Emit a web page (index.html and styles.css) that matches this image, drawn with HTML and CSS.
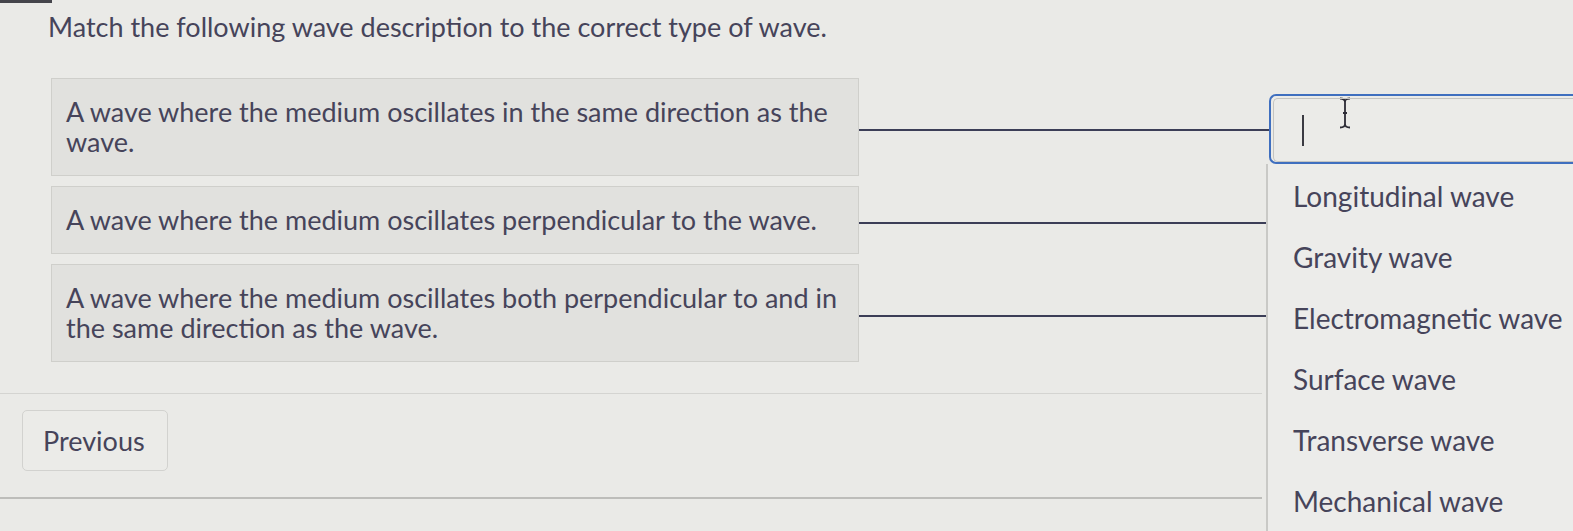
FILE: index.html
```html
<!DOCTYPE html>
<html lang="en">
<head>
  <meta charset="UTF-8" />
  <title>Matching Question</title>
  <link rel="stylesheet" href="styles.css">
</head>
<body>

<div class="topbar"></div>

<h1 class="title">Match the following wave description to the correct type of wave.</h1>

<div class="matching">
  <div class="prompt">A wave where the medium oscillates in the same direction as the wave.</div>
  <div class="connector"></div>
  <div class="slot">
    <div class="answer-input">
      <span class="caret"></span>
      <svg class="ibeam" width="14" height="32" viewBox="0 0 14 32">
        <path d="M2 1.5 Q7 1.5 7 5 Q7 1.5 12 1.5 M7 5 V27 M5 16 H9 M2 30.5 Q7 30.5 7 27 Q7 30.5 12 30.5" fill="none" stroke="#2d2c36" stroke-width="1.8"/>
      </svg>
    </div>
    <ul class="options">
      <li>Longitudinal wave</li>
      <li>Gravity wave</li>
      <li>Electromagnetic wave</li>
      <li>Surface wave</li>
      <li>Transverse wave</li>
      <li>Mechanical wave</li>
    </ul>
  </div>

  <div class="prompt">A wave where the medium oscillates perpendicular to the wave.</div>
  <div class="connector"></div>
  <div class="slot"></div>

  <div class="prompt">A wave where the medium oscillates both perpendicular to and in the same direction as the wave.</div>
  <div class="connector"></div>
  <div class="slot"></div>
</div>

<hr class="divider">

<div class="actions">
  <button class="btn">Previous</button>
</div>

<hr class="divider bottom">

</body>
</html>
```

FILE: styles.css
```css
body {
  font-family: Lato, "Open Sans", sans-serif;
  margin: 0;
  min-height: 531px;
  background-color: #eaeae7;
  color: #46445a;
}
.topbar {
  width: 52px;
  height: 3px;
  background-color: #45454b;
}

.title {
  font-size: 27px;
  font-weight: normal;
  line-height: 34px;
  margin: 7px 0 0 48px;
}

.matching {
  display: grid;
  grid-template-columns: 808px 410px 1fr;
  row-gap: 10px;
  align-items: center;
  margin: 34px 0 0 51px;
}
.prompt {
  background-color: #e1e1de;
  border: 1px solid #cfcfcb;
  padding: 18px 14px;
  font-size: 27px;
  line-height: 30px;
}
.connector {
  height: 2px;
  background-color: #3c3e57;
  margin-top: 5px;
}

.slot {
  position: relative;
}
.answer-input {
  display: flex;
  align-items: flex-start;
  height: 64px;
  margin-top: 4px;
  border: 2px solid #3f6fbf;
  border-right: none;
  border-radius: 7px 0 0 7px;
  padding: 2px 0 0 3px;
  background-color: #ebebe8;
  position: relative;
}
.answer-input::before {
  content: "";
  position: absolute;
  inset: 2px 0 0 2px;
  border: 1px solid #c4c4c1;
  border-right: none;
  border-radius: 5px 0 0 5px;
}
.caret {
  width: 2px;
  height: 31px;
  background-color: #3a3a42;
  margin: 17px 0 0 28px;
}
.ibeam {
  margin: -1px 0 0 34px;
}

.options {
  position: absolute;
  top: 100%;
  left: -3px;
  right: 0;
  margin: 0;
  padding: 2px 0 0;
  list-style: none;
  background-color: #ececea;
  border-left: 2px solid #c9c9c6;
  z-index: 10;
}
.options li {
  font-size: 28px;
  line-height: 31px;
  padding: 15px 0 15px 25px;
  white-space: nowrap;
}

.divider {
  border: none;
  border-top: 1px solid #d4d4d1;
  margin: 31px 0 0;
  width: 1262px;
}
.divider.bottom {
  border-top: 2px solid #bdbdba;
  margin-top: 26px;
}
.actions {
  padding: 16px 0 0 22px;
}
.btn {
  font-family: inherit;
  font-size: 27px;
  color: #46445a;
  background-color: #ebebe8;
  border: 1px solid #d2d2cf;
  border-radius: 5px;
  padding: 12px 20px;
  width: 146px;
  height: 61px;
  text-align: left;
}
```
